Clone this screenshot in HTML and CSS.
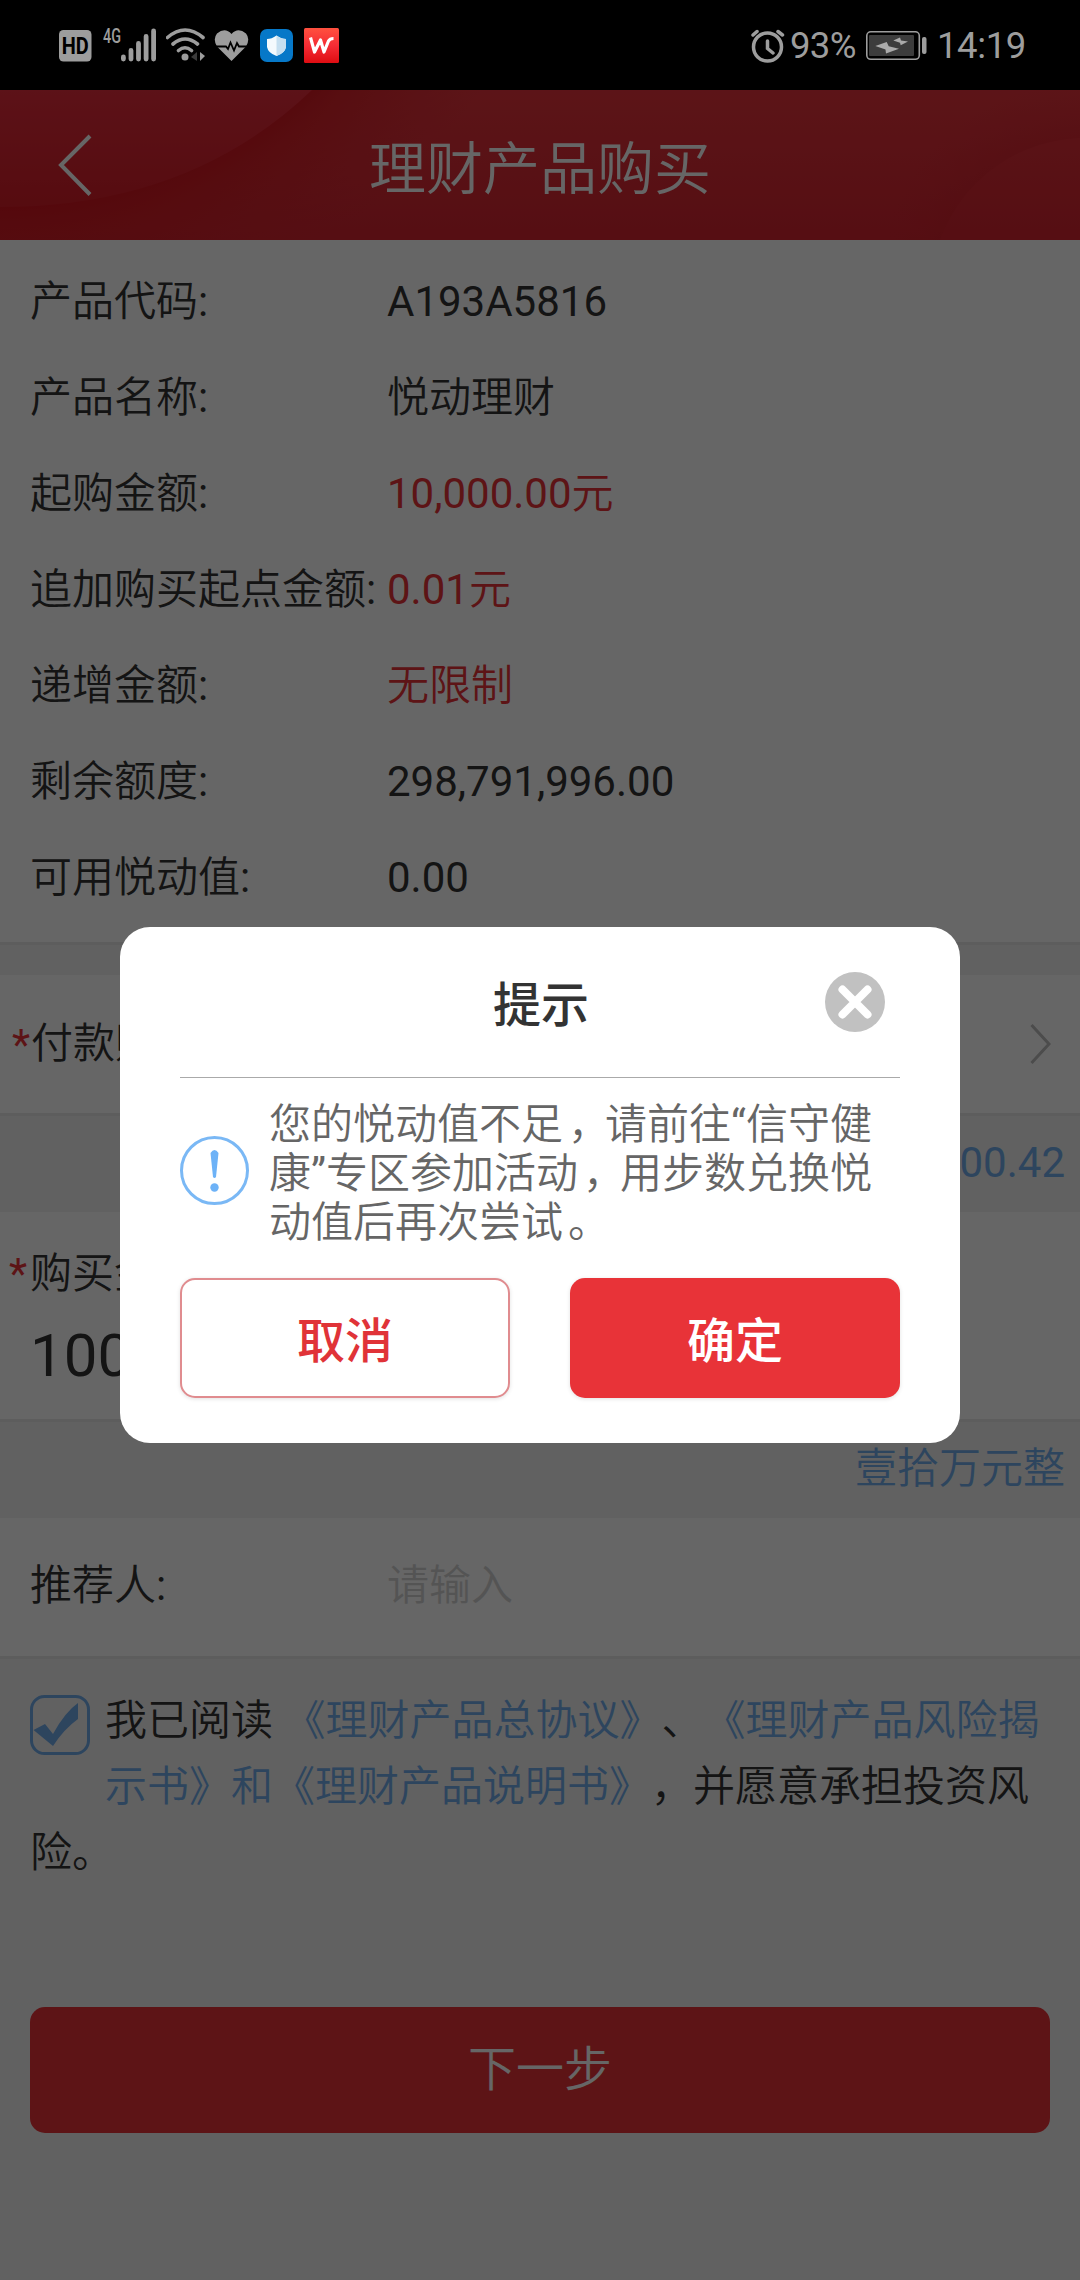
FILE: index.html
```html
<!DOCTYPE html>
<html lang="zh-CN">
<head>
<meta charset="utf-8">
<title>理财产品购买</title>
<link rel="stylesheet" href="styles.css">
</head>
<body>
<div class="screen">
  <div class="status">
    <div class="status-left">
      <svg width="33" height="90" viewBox="59 0 33 90"><rect x="59" y="30" width="32.5" height="31.5" rx="4.5" fill="#9d9d9d"/><text x="75.3" y="53.500" text-anchor="middle" textLength="27" lengthAdjust="spacingAndGlyphs" class="hd">HD</text></svg>
      <svg class="ml-signal" width="54" height="90" viewBox="103 0 54 90"><text x="103" y="43" textLength="18" lengthAdjust="spacingAndGlyphs" class="net">4G</text><g stroke="#9d9d9d" stroke-width="4.8" stroke-linecap="round"><path d="M123.4 57v2M131 50.5v8.5M138.500 43.500v15.500M146.100 36.500v22.500M153.600 31v28"/></g></svg>
      <svg class="ml-wifi" width="40" height="90" viewBox="166 0 40 90"><g fill="none" stroke="#9d9d9d" stroke-width="3.600" stroke-linecap="round"><path d="M167.500 37.500Q185 22.500 203 37.500M173 44Q185 34 197.500 44M178.500 50.500Q185 45 191.500 50.500"/></g><circle cx="185" cy="57" r="3.500" fill="#9d9d9d"/><path d="M197 52v9l-6-4z" fill="#3a3a3a"/><path d="M200 52v9l5-5z" fill="#9d9d9d"/></svg>
      <svg class="ml-heart" width="35" height="90" viewBox="214 0 35 90"><path d="M231.500 61L217 46.500Q212.500 39 217 33.500Q225 27 231.500 34Q238 27 246 33.500Q250.500 39 246 46.500Z" fill="#9d9d9d"/><path d="M214 46.500h12l2 2.500 2.500-6.500 3.500 8 3-7.500 2 3.500h10" fill="none" stroke="#000" stroke-width="1.800"/></svg>
      <svg class="ml-shield" width="33" height="90" viewBox="260 0 33 90"><rect x="260" y="29" width="33" height="33" rx="7" fill="#0678c8"/><path d="M276.500 35.500q5 3.500 9.500 3.500v8q-1 6-9.500 9-8.500-3-9.500-9v-8q4.500 0 9.500-3.500" fill="#f4fafd"/><path d="M276.500 35.500q5 3.500 9.500 3.500v8q-1 6-9.500 9z" fill="#c5dff0"/></svg>
      <svg class="ml-w" width="35" height="90" viewBox="304 0 35 90"><defs><linearGradient id="wg" x2="0" y2="1"><stop stop-color="#ff513f"/><stop offset=".5" stop-color="#f52c35"/><stop offset="1" stop-color="#de0d12"/></linearGradient></defs><rect x="304" y="28" width="35" height="35" rx="1.500" fill="url(#wg)"/><path d="M310.500 37.500L314.500 52 320.500 40 324 52 328.500 41Q329.800 38.500 333.500 38.500" fill="none" stroke="#fff" stroke-width="3.200" stroke-linejoin="round"/></svg>
    </div>
    <div class="status-right">
      <svg width="34" height="90" viewBox="751 0 34 90"><g fill="none" stroke="#9d9d9d" stroke-width="3.500" stroke-linecap="round"><circle cx="767.500" cy="47" r="14"/><path d="M767.500 41v7.500l5.500 4.500M753 35l4-3.500M778 31.500l4.500 3.500"/></g></svg>
      <span class="pct">93%</span>
      <svg class="battery" width="61" height="90" viewBox="866 0 61 90"><rect x="866.800" y="31.800" width="52.500" height="27.500" rx="4" fill="none" stroke="#9d9d9d" stroke-width="1.600"/><rect x="869" y="35" width="45" height="21" rx="1" fill="#3c3c3c"/><path d="M875.300 46L886.700 42 888.700 46.300 899 48.700 886 53.500 885.500 49.500ZM893.300 40.500L900 37.600 901 40.500 908 41.500 900.700 45.300 900 42.700Z" fill="#aaa"/><rect x="922" y="37" width="4.500" height="17" rx="2" fill="#9d9d9d"/></svg>
      <span class="time">14:19</span>
    </div>
  </div>

  <div class="app">
    <header class="header">
      <svg class="header-art" width="1080" height="150" viewBox="0 0 1080 150" preserveAspectRatio="none">
        <defs>
          <linearGradient id="hb" gradientUnits="userSpaceOnUse" x1="0" y1="0" x2="0" y2="150"><stop stop-color="#e6343c"/><stop offset="1" stop-color="#d62430"/></linearGradient>
          <linearGradient id="lc" gradientUnits="userSpaceOnUse" x1="0" y1="0" x2="0" y2="120"><stop stop-color="#e62d3c"/><stop offset="1" stop-color="#d71d28"/></linearGradient>
          <radialGradient id="ls" gradientUnits="userSpaceOnUse" cx="-10" cy="-343" r="600"><stop offset=".76" stop-color="#d3141f"/><stop offset=".82" stop-color="#d5181f" stop-opacity=".6"/><stop offset="1" stop-color="#d62430" stop-opacity="0"/></radialGradient>
          <radialGradient id="rs" gradientUnits="userSpaceOnUse" cx="1085" cy="202" r="210"><stop offset=".73" stop-color="#cc1e28" stop-opacity=".3"/><stop offset="1" stop-color="#d62430" stop-opacity="0"/></radialGradient>
        </defs>
        <rect width="1080" height="150" fill="url(#hb)"/>
        <circle cx="-10" cy="-343" r="600" fill="url(#ls)"/>
        <circle cx="1085" cy="202" r="210" fill="url(#rs)"/>
        <path d="M0 0H312Q190 117 0 117Z" fill="url(#lc)"/>
        <circle cx="1085" cy="202" r="154" fill="url(#hb)"/>
      </svg>
      <svg class="back" width="36" height="64" viewBox="57 133 36 64"><path d="M90 136L61 165l29 29.500" fill="none" stroke="#fff" stroke-width="4"/></svg>
      <h1 class="title">理财产品购买</h1>
    </header>

    <section class="block details">
      <div class="row"><span class="label">产品代码:</span><span>A193A5816</span></div>
      <div class="row"><span class="label">产品名称:</span><span>悦动理财</span></div>
      <div class="row"><span class="label">起购金额:</span><span class="red">10,000.00元</span></div>
      <div class="row"><span class="label">追加购买起点金额:</span><span class="red">0.01元</span></div>
      <div class="row"><span class="label">递增金额:</span><span class="red">无限制</span></div>
      <div class="row"><span class="label">剩余额度:</span><span>298,791,996.00</span></div>
      <div class="row"><span class="label">可用悦动值:</span><span>0.00</span></div>
    </section>

    <section class="block account">
      <span class="star">*</span><span class="label">付款账户:</span>
      <svg class="chevron" width="21" height="42" viewBox="0 0 21 42"><path d="M1.500 2L19 21 1.500 40" fill="none" stroke="#bdbdbd" stroke-width="3"/></svg>
    </section>
    <div class="hint">100,000.42</div>

    <section class="block amount">
      <div class="amount-label"><span class="star">*</span><span>购买金额:</span></div>
      <div class="amount-value">100000</div>
    </section>
    <div class="hint">壹拾万元整</div>

    <section class="block referrer">
      <div class="row"><span class="label">推荐人:</span><span class="placeholder">请输入</span></div>
    </section>

    <div class="agree"><svg class="check" width="60" height="60" viewBox="0 0 60 60"><rect x="1.500" y="1.500" width="57" height="57" rx="13" fill="none" stroke="#71acec" stroke-width="3"/><path d="M3.500 35l11.500-6 8 10Q35 17 48 8v16Q34 34 23 51Z" fill="#71acec"/></svg>我已阅读 <a>《理财产品总协议》</a>、<a>《理财产品风险揭示书》和《理财产品说明书》</a>，并愿意承担投资风险。</div>

    <button class="next">下一步</button>

    <div class="mask">
      <div class="dialog">
        <div class="dialog-head">
          <h2>提示</h2>
          <svg class="close" width="60" height="60" viewBox="0 0 60 60"><circle cx="30" cy="30" r="30" fill="#c1c1c1"/><path d="M17.500 17.500l25 25m0-25l-25 25" stroke="#fff" stroke-width="8" stroke-linecap="round"/></svg>
        </div>
        <div class="message">
          <svg width="69" height="69" viewBox="0 0 69 69"><circle cx="34.500" cy="34.500" r="33" fill="none" stroke="#7ab8f5" stroke-width="3"/><path d="M30.500 17q4-6 8 0l-2.500 24q-1.500 2-3 0z" fill="#6db2f7"/><circle cx="34.500" cy="51.500" r="4.200" fill="#6db2f7"/></svg>
          <p>您的悦动值不足<span class="punct">，</span>请前往“信守健康”专区参加活动<span class="punct">，</span>用步数兑换悦动值后再次尝试<span class="punct">。</span></p>
        </div>
        <div class="actions">
          <button class="btn cancel">取消</button>
          <button class="btn confirm">确定</button>
        </div>
      </div>
    </div>
  </div>
</div>
</body>
</html>
```
FILE: styles.css
```css
* { box-sizing: border-box; margin: 0; padding: 0; }
body {
  font-family: Roboto, "Noto Sans CJK SC DemiLight", "Noto Sans CJK SC", sans-serif;
  font-size: 42px;
  color: #333;
  text-spacing-trim: space-all;
}
svg { display: block; flex: none; }
button { font-family: inherit; border: 0; }

.screen { width: 1080px; height: 2280px; overflow: hidden; }

.status {
  height: 90px;
  padding: 0 54px 0 59px;
  display: flex;
  justify-content: space-between;
  background: #000;
  color: #9d9d9d;
  font-size: 36.5px;
  line-height: 92px;
}
.status-left, .status-right { display: flex; }
.hd { font: 700 23px Roboto, sans-serif; fill: #000; }
.net { font: 500 21px Roboto, sans-serif; fill: #9d9d9d; }
.ml-signal { margin-left: 11px; }
.ml-wifi { margin-left: 9px; }
.ml-heart { margin-left: 8px; }
.ml-shield { margin-left: 11px; }
.ml-w { margin-left: 11px; }
.pct { width: 76px; padding-left: 5px; letter-spacing: -.7px; }
.battery { margin-left: 5px; }
.time { width: 99px; padding-left: 10px; letter-spacing: -.4px; }

.app {
  position: relative;
  height: 2190px;
  background: #f2f2f2;
}
.header {
  position: relative;
  height: 150px;
  display: flex;
  align-items: center;
  padding-left: 57px;
}
.header-art { position: absolute; left: 0; top: 0; }
.back { position: relative; }
.title {
  position: relative;
  flex: 1;
  margin-right: 93px;
  padding-top: 10px;
  text-align: center;
  font-size: 57px;
  font-weight: 400;
  line-height: 140px;
  color: #fff;
}

.block { background: #fff; border-bottom: 3px solid #e8e8e8; }
.details { height: 705px; padding-top: 14px; margin-bottom: 30px; }
.row { display: flex; height: 96px; line-height: 96px; padding-left: 30px; white-space: nowrap; }
.row .label { width: 357px; }
.red { color: #e83338; }

.account { height: 141px; display: flex; align-items: center; padding: 0 29px 0 12px; }
.star { color: #e83338; width: 19px; }
.account .label { flex: 1; line-height: 60px; }
.hint {
  height: 96px;
  line-height: 94px;
  padding-right: 15px;
  text-align: right;
  color: #71acec;
}
.amount { height: 210px; padding: 32px 0 0 9px; }
.amount-label { display: flex; line-height: 60px; }
.amount-label .star { width: 21px; }
.amount-value { padding-left: 21px; font-size: 60px; line-height: 104px; }
.referrer { height: 141px; padding-top: 20px; }
.placeholder { color: #d2d2d2; }

.agree { margin: 29px 28px 0 30px; line-height: 66px; }
.agree a { color: #71acec; }
.check { float: left; margin: 7px 15px 5px 0; }

.next {
  display: block;
  width: 1020px;
  height: 126px;
  margin: 121px 30px 0;
  padding-bottom: 10px;
  border-radius: 15px;
  background: #e83338;
  color: #fff;
  font-size: 48px;
}

/* Dimmed layer and its dialog */
.mask {
  position: absolute;
  inset: 0;
  background: rgba(0, 0, 0, .6);
  padding: 837px 120px 0;
}
.dialog {
  height: 516px;
  padding: 0 60px;
  border-radius: 30px;
  background: #fff;
}
.dialog-head {
  height: 151px;
  display: flex;
  align-items: center;
  padding: 0 15px 0 77px;
  border-bottom: 1px solid #aaa;
}
.dialog-head h2, .btn {
  font-family: "Noto Sans CJK SC", sans-serif;
  font-size: 48px;
  font-weight: 500;
}
.dialog-head h2 { flex: 1; padding-bottom: 3px; text-align: center; }
.message { height: 200px; display: flex; align-items: center; gap: 20px; color: #666; }
.message svg { margin-top: -15px; }
.message p { flex: 1; line-height: 49px; margin-top: -9px; }
.punct { margin: 0 -5px 0 5px; }
.actions { display: flex; gap: 60px; }
.btn {
  width: 330px;
  height: 120px;
  padding-bottom: 3px;
  border-radius: 15px;
  box-shadow: 0 1px 4px rgba(0, 0, 0, .12);
}
.cancel { background: #fff; border: 2px solid #e08c8f; color: #e03338; }
.confirm { background: #e83338; color: #fff; }
```
